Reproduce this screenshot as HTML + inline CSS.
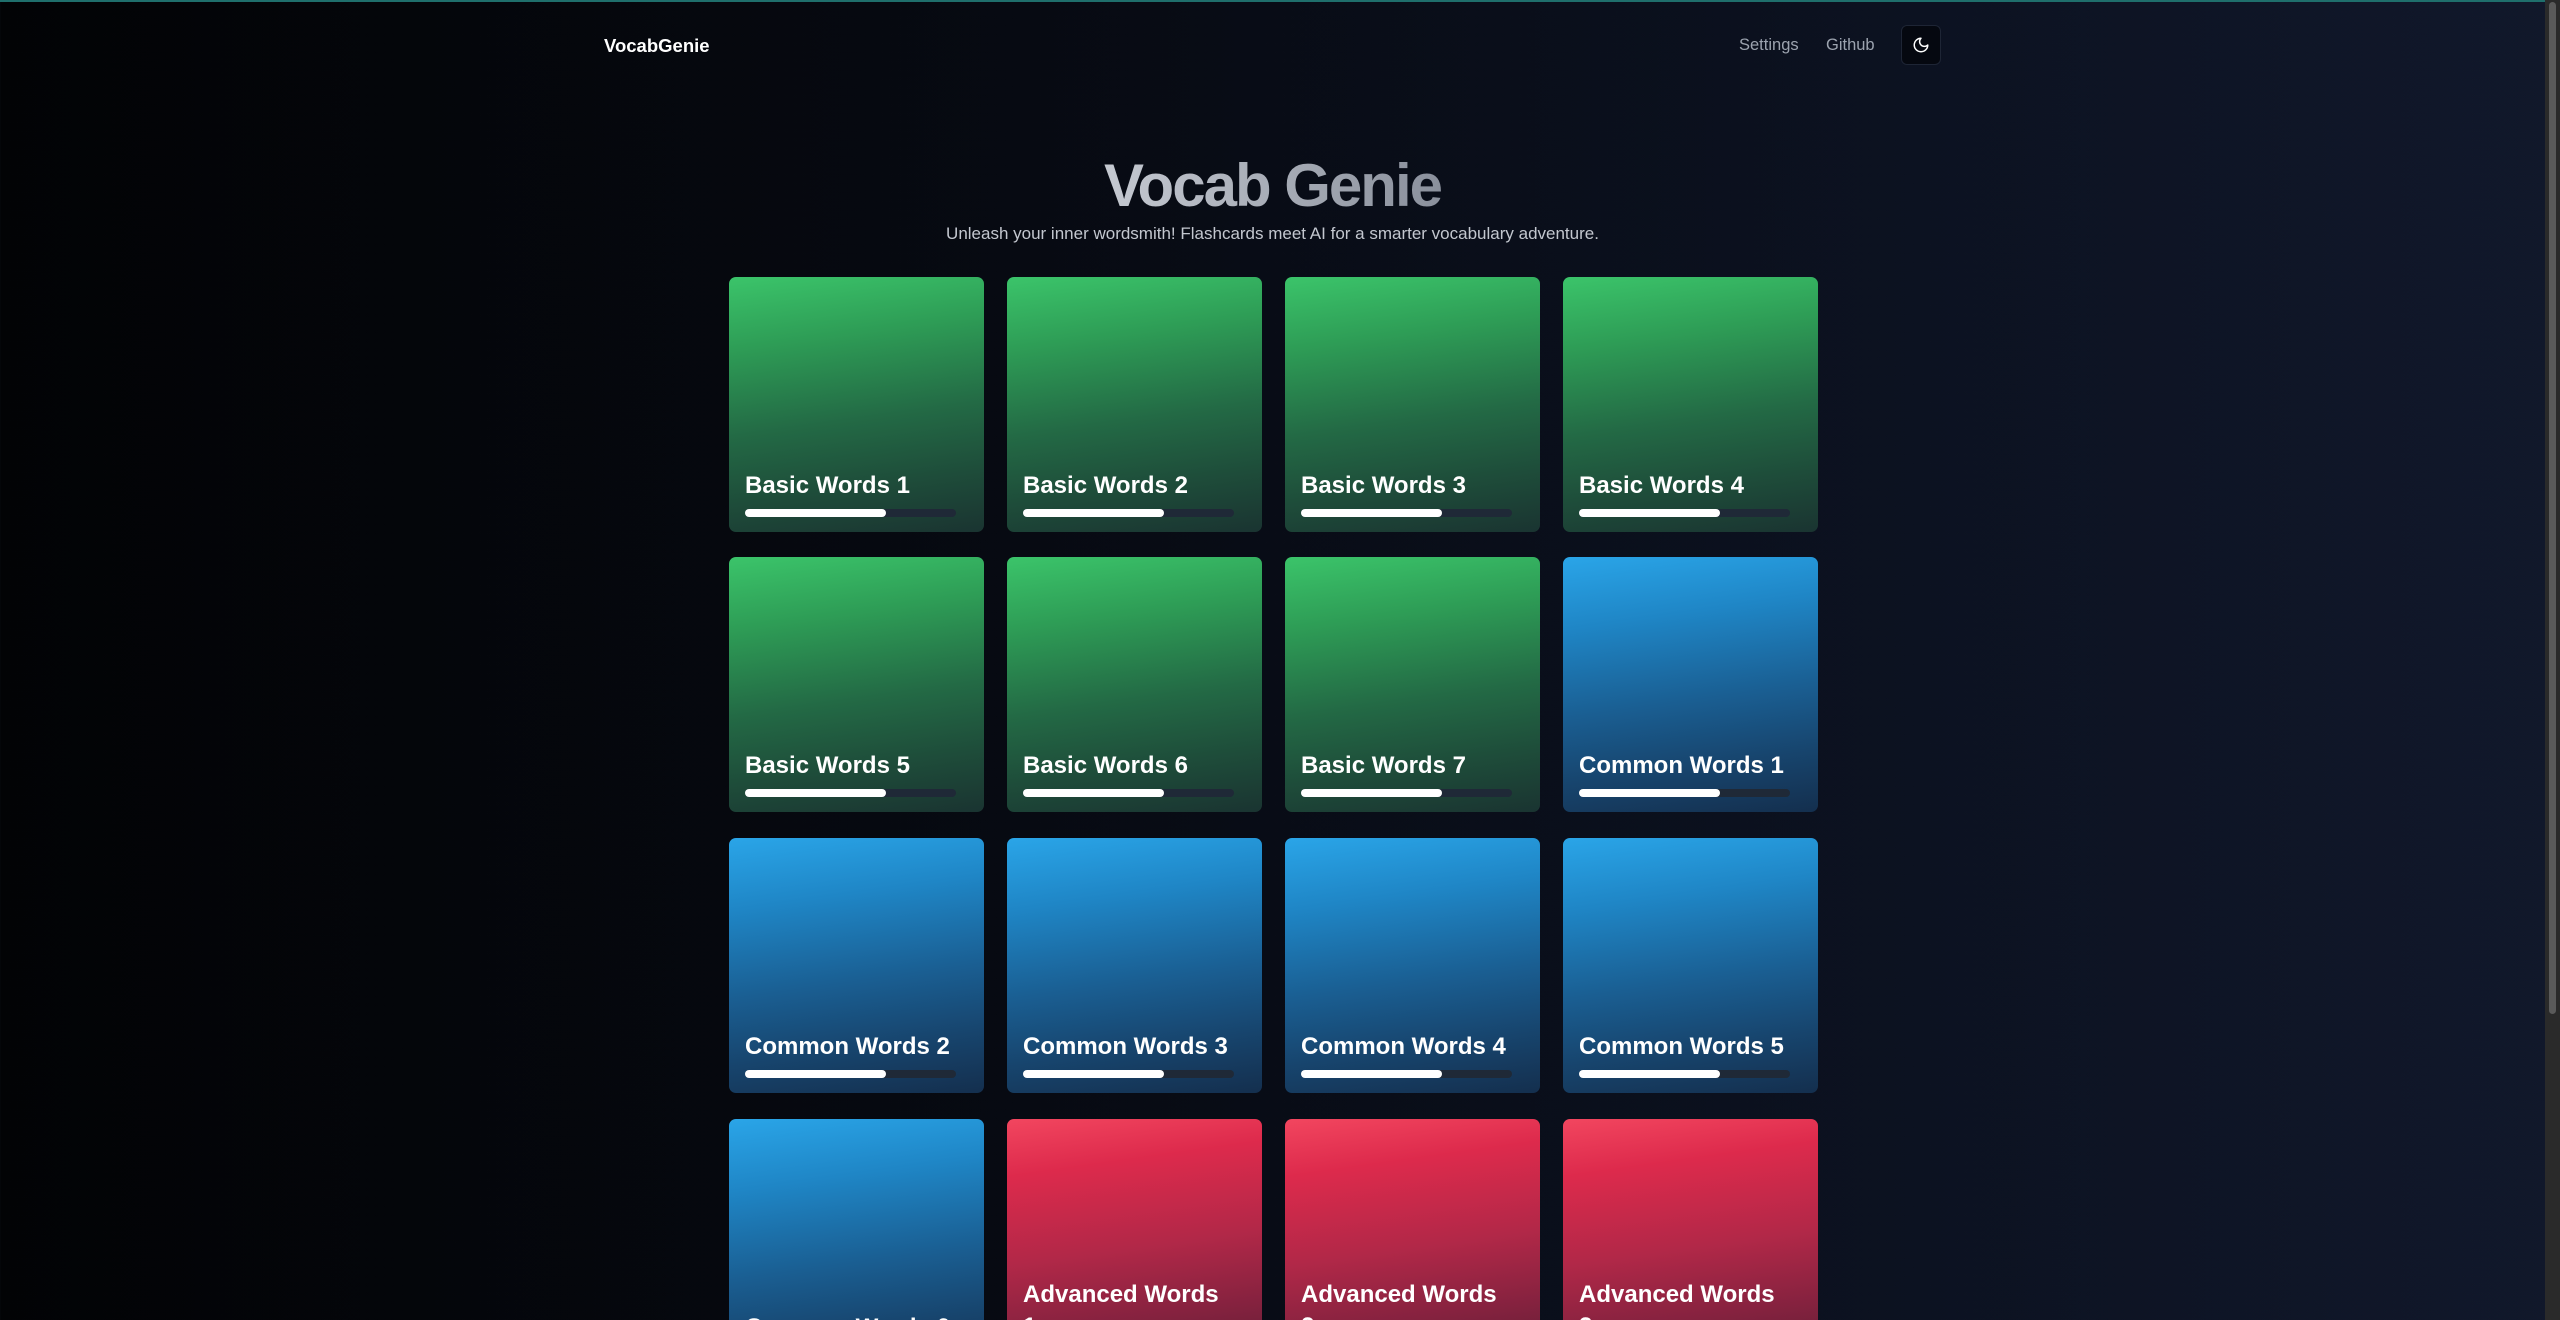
<!DOCTYPE html>
<html><head><meta charset="utf-8"><style>
*{box-sizing:border-box;margin:0;padding:0}
html,body{width:2560px;height:1320px;overflow:hidden}
body{font-family:"Liberation Sans",sans-serif;background:linear-gradient(90deg,#020305 0%,#070a12 40%,#0c1221 75%,#11182b 100%);position:relative;color:#fff}
.topline{position:absolute;left:0;top:0;width:2545px;height:2px;background:#1f6f6c}
.sb{position:absolute;right:0;top:0;width:15px;height:1320px;background:#2a2a2a}
.sb div{position:absolute;left:4px;top:2px;width:7px;height:1012px;background:#5a5a5a;border-radius:4px}
.brand{position:absolute;left:604px;top:35px;font-size:18.5px;font-weight:bold;color:#fff}
.nav{position:absolute;top:36px;font-size:16.5px;color:#9ca3af}
.btn{position:absolute;left:1901px;top:25px;width:40px;height:40px;border:1px solid #1e2535;border-radius:6px;background:#050810;display:flex;align-items:center;justify-content:center}
h1{position:absolute;left:0;width:2545px;top:150px;text-align:center;font-size:60px;font-weight:bold;letter-spacing:-2px;line-height:72px}
h1 span{background:linear-gradient(90deg,#c5c9d1,#8a909c);-webkit-background-clip:text;background-clip:text;color:transparent}
.sub{position:absolute;left:0;width:2545px;top:224px;text-align:center;font-size:17px;color:#c3c7cf}
.card{position:absolute;width:255px;height:255px;border-radius:7px;padding:16px}
.card h3{position:absolute;left:16px;right:16px;bottom:30px;font-size:24px;line-height:32px;font-weight:bold;color:#fff}
.bar{position:absolute;left:16px;bottom:15px;width:211px;height:8px;border-radius:4px;background:#1f2937}
.bar div{width:141px;height:8px;border-radius:4px;background:#fff}
.g{background:linear-gradient(172deg,#3bc46a 0%,#2e9d56 25%,#236a45 55%,#1e4d3a 78%,#1a3431 100%)}
.b{background:linear-gradient(172deg,#2aa5e8 0%,#1f86c6 25%,#1a5f93 55%,#17456e 78%,#142f4e 100%)}
.r{background:linear-gradient(172deg,#f2465f 0%,#dd2a4c 20%,#b22848 50%,#85223f 75%,#561c32 100%)}
.card h3.adv{bottom:31px}
</style></head><body>
<div class="topline"></div>
<div class="brand">VocabGenie</div>
<div class="nav" style="left:1739px">Settings</div>
<div class="nav" style="left:1826px">Github</div>
<div class="btn"><svg width="18" height="18" viewBox="0 0 24 24" fill="none" stroke="#fff" stroke-width="2" stroke-linecap="round" stroke-linejoin="round"><path d="M12 3a6 6 0 0 0 9 9 9 9 0 1 1-9-9Z"/></svg></div>
<h1><span>Vocab Genie</span></h1>
<div class="sub">Unleash your inner wordsmith! Flashcards meet AI for a smarter vocabulary adventure.</div>

<div class="card g" style="left:729px;top:277px"><h3>Basic Words 1</h3><div class="bar"><div></div></div></div>
<div class="card g" style="left:1007px;top:277px"><h3>Basic Words 2</h3><div class="bar"><div></div></div></div>
<div class="card g" style="left:1285px;top:277px"><h3>Basic Words 3</h3><div class="bar"><div></div></div></div>
<div class="card g" style="left:1563px;top:277px"><h3>Basic Words 4</h3><div class="bar"><div></div></div></div>

<div class="card g" style="left:729px;top:557px"><h3>Basic Words 5</h3><div class="bar"><div></div></div></div>
<div class="card g" style="left:1007px;top:557px"><h3>Basic Words 6</h3><div class="bar"><div></div></div></div>
<div class="card g" style="left:1285px;top:557px"><h3>Basic Words 7</h3><div class="bar"><div></div></div></div>
<div class="card b" style="left:1563px;top:557px"><h3>Common Words 1</h3><div class="bar"><div></div></div></div>

<div class="card b" style="left:729px;top:838px"><h3>Common Words 2</h3><div class="bar"><div></div></div></div>
<div class="card b" style="left:1007px;top:838px"><h3>Common Words 3</h3><div class="bar"><div></div></div></div>
<div class="card b" style="left:1285px;top:838px"><h3>Common Words 4</h3><div class="bar"><div></div></div></div>
<div class="card b" style="left:1563px;top:838px"><h3>Common Words 5</h3><div class="bar"><div></div></div></div>

<div class="card b" style="left:729px;top:1119px"><h3>Common Words 6</h3><div class="bar"><div></div></div></div>
<div class="card r" style="left:1007px;top:1119px"><h3 class="adv">Advanced Words<br>1</h3></div>
<div class="card r" style="left:1285px;top:1119px"><h3 class="adv">Advanced Words<br>2</h3></div>
<div class="card r" style="left:1563px;top:1119px"><h3 class="adv">Advanced Words<br>3</h3></div>

<div class="sb"><div></div></div>
</body></html>
